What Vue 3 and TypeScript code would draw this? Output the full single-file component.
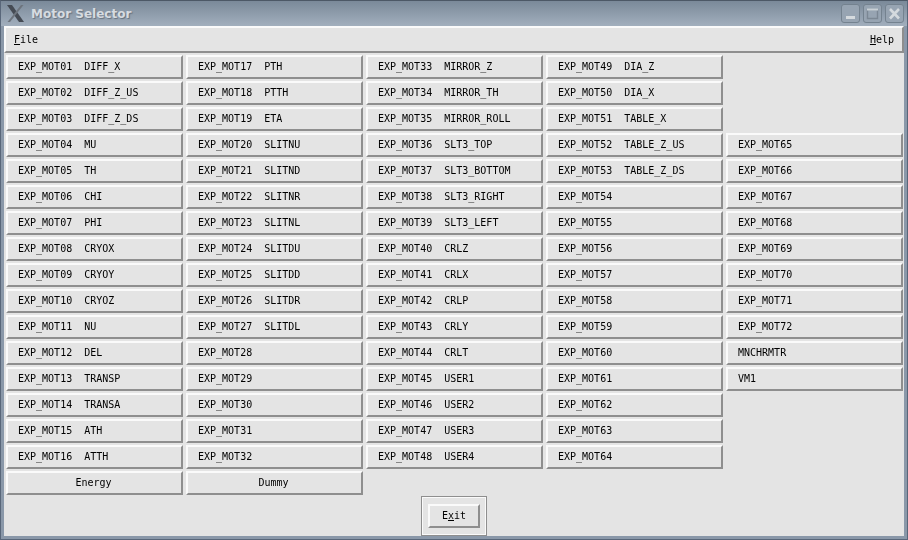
<script setup lang="ts">
interface Cell { label: string; center?: boolean }

const motor = (n: number, name = ''): Cell => ({
  label: `EXP_MOT${String(n).padStart(2, '0')}${name ? '  ' + name : ''}`,
})

const named: string[][] = [
  ['DIFF_X', 'DIFF_Z_US', 'DIFF_Z_DS', 'MU', 'TH', 'CHI', 'PHI', 'CRYOX', 'CRYOY', 'CRYOZ', 'NU', 'DEL', 'TRANSP', 'TRANSA', 'ATH', 'ATTH'],
  ['PTH', 'PTTH', 'ETA', 'SLITNU', 'SLITND', 'SLITNR', 'SLITNL', 'SLITDU', 'SLITDD', 'SLITDR', 'SLITDL'],
  ['MIRROR_Z', 'MIRROR_TH', 'MIRROR_ROLL', 'SLT3_TOP', 'SLT3_BOTTOM', 'SLT3_RIGHT', 'SLT3_LEFT', 'CRLZ', 'CRLX', 'CRLP', 'CRLY', 'CRLT', 'USER1', 'USER2', 'USER3', 'USER4'],
  ['DIA_Z', 'DIA_X', 'TABLE_X', 'TABLE_Z_US', 'TABLE_Z_DS'],
]

const columns: (Cell | null)[][] = named.map((names, c) =>
  Array.from({ length: 16 }, (_, i) => motor(c * 16 + i + 1, names[i])),
)
columns[0].push({ label: 'Energy', center: true })
columns[1].push({ label: 'Dummy', center: true })
columns.push([
  null, null, null,
  ...Array.from({ length: 8 }, (_, i) => motor(65 + i)),
  { label: 'MNCHRMTR' },
  { label: 'VM1' },
])
</script>

<template>
  <div class="window">
    <header class="titlebar">
      <svg class="logo" width="17" height="17" viewBox="0 0 17 17">
        <path d="M0 0 L5 0 L17 17 L12 17 Z" fill="#454b54" />
        <path d="M14 0 L16.5 0 L3 17 L0.5 17 Z" fill="#6d747d" />
      </svg>
      <span class="title">Motor Selector</span>
      <div class="controls">
        <div class="ctl">
          <svg width="17" height="17" viewBox="0 0 17 17"><path d="M4 11h9v3H4z" fill="#d5dade" /></svg>
        </div>
        <div class="ctl">
          <svg width="17" height="17" viewBox="0 0 17 17"><path d="M3.5 4.5h10v9h-10z" fill="none" stroke="#7b8794" stroke-width="1.4" /><path d="M3 4.5h11" stroke="#c9d0d6" stroke-width="2" /></svg>
        </div>
        <div class="ctl">
          <svg width="17" height="17" viewBox="0 0 17 17"><path d="M4 4l9 9.5M13 4l-9 9.5" stroke="#d5dade" stroke-width="2.6" /></svg>
        </div>
      </div>
    </header>

    <main class="body">
      <nav class="menubar">
        <span><u>F</u>ile</span>
        <span><u>H</u>elp</span>
      </nav>

      <section class="grid">
        <div v-for="(col, c) in columns" :key="c" class="col">
          <template v-for="(cell, r) in col" :key="r">
            <button v-if="cell" class="btn" :class="{ center: cell.center }">{{ cell.label }}</button>
            <div v-else class="blank"></div>
          </template>
        </div>
      </section>

      <footer class="footer">
        <div class="frame">
          <button class="btn exit">E<u>x</u>it</button>
        </div>
      </footer>
    </main>
  </div>
</template>

<style scoped>
.window {
  width: 908px;
  height: 540px;
  box-sizing: border-box;
  display: flex;
  flex-direction: column;
  background: #8a98a9;
  border: 1px solid #59677a;
  border-top-color: #4c5866;
  overflow: hidden;
}
.titlebar {
  height: 25px;
  flex: none;
  display: flex;
  align-items: center;
  padding: 0 3px 0 6px;
  background: linear-gradient(to bottom, #7a8999, #a2afbd);
}
.logo {
  flex: none;
  margin-right: 7px;
}
.title {
  font: bold 12px "DejaVu Sans", sans-serif;
  color: #d6dbe0;
  text-shadow: 1px 1px 1px #66727f;
}
.controls {
  margin-left: auto;
  display: flex;
  gap: 3px;
}
.ctl {
  width: 17px;
  height: 17px;
  box-sizing: content-box;
  border: 1px solid #74828f;
  border-radius: 3px;
  background: #97a4b2;
  display: flex;
}
.body {
  flex: 1;
  margin: 0 3px 3px;
  min-height: 0;
  background: #e4e4e4;
  font: 10px/1 "DejaVu Sans Mono", monospace;
  color: #000;
  display: flex;
  flex-direction: column;
}
.menubar {
  height: 27px;
  flex: none;
  box-sizing: border-box;
  display: flex;
  justify-content: space-between;
  align-items: center;
  padding: 0 8px 0 8px;
  border: 2px solid;
  border-color: #fafafa #8e8e8e #8e8e8e #fafafa;
  white-space: pre;
  will-change: transform;
}
.grid {
  display: flex;
  gap: 3px;
  padding: 2px 0 0 2px;
  will-change: transform;
}
.col {
  display: flex;
  flex-direction: column;
  gap: 2px;
  width: 177px;
}
.blank {
  height: 24px;
}
.btn {
  display: block;
  appearance: none;
  margin: 0;
  height: 24px;
  box-sizing: border-box;
  padding: 0 0 0 10px;
  border: 2px solid;
  border-color: #fafafa #8e8e8e #8e8e8e #fafafa;
  background: #e4e4e4;
  font: inherit;
  color: inherit;
  text-align: left;
  white-space: pre;
}
.btn.center {
  padding: 0 2px 0 0;
  text-align: center;
}
.footer {
  display: flex;
  justify-content: center;
  padding-top: 1px;
  will-change: transform;
}
.frame {
  box-sizing: border-box;
  width: 66px;
  height: 40px;
  border: 1px solid #8e8e8e;
  box-shadow: inset 0 0 0 1px #fafafa;
  display: flex;
  align-items: center;
  justify-content: center;
}
.btn.exit {
  width: 52px;
  height: 24px;
  padding: 0;
  text-align: center;
}
</style>
